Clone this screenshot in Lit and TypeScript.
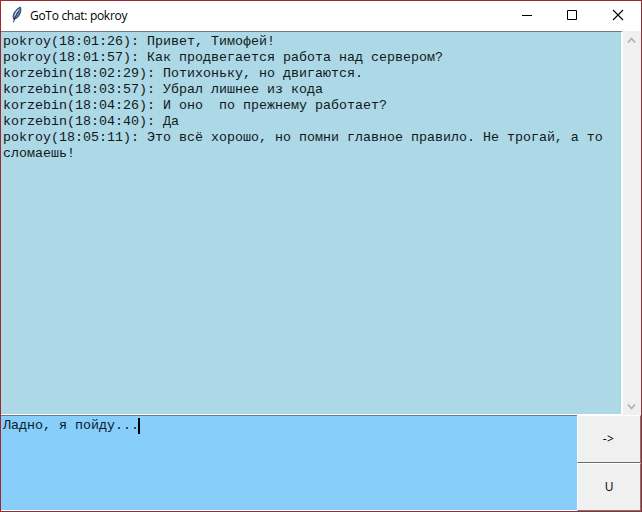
import { LitElement, html, css } from "lit";
import { customElement, property, state } from "lit/decorators.js";

interface Message {
  author: string;
  time: string;
  text: string;
}

@customElement("title-bar")
class TitleBar extends LitElement {
  @property() caption = "";

  static styles = css`
    :host {
      display: flex;
      align-items: center;
      height: 30px;
      background: #fff;
      flex: none;
    }
    .feather {
      width: 16px;
      height: 18px;
      margin-left: 8px;
      margin-bottom: 2px;
    }
    .caption {
      flex: 1;
      margin-left: 5px;
      font: 12px/16px "Open Sans", "Noto Sans", sans-serif;
      letter-spacing: -0.3px;
      color: #000;
      white-space: pre;
    }
    .control {
      width: 46px;
      height: 28px;
      margin-bottom: 2px;
      display: grid;
      place-items: center;
    }
    .control svg {
      display: block;
      width: 12px;
      height: 12px;
    }
  `;

  render() {
    return html`
      <svg class="feather" viewBox="0 0 16 18">
        <path d="M11.300 1.200C8.200 2.200 5 5.800 4.200 9.600c-.2 1.500 0 2.800.6 3.800 3-.8 5.400-3.200 6.300-6.200C12.100 5 12.100 2.800 11.300 1.200z" fill="#5c7eb0" stroke="#1c2a48" stroke-width="0.900" />
        <path d="M9.900 3.600C7.800 5.200 6.200 7.800 5.700 10.400" fill="none" stroke="#b9cfe8" stroke-width="1.400" />
        <path d="M10.200 4.500C7.800 7.500 5.500 11.800 4.500 16.400" fill="none" stroke="#1a2744" stroke-width="0.900" />
      </svg>
      <div class="caption">${this.caption}</div>
      <div class="control">
        <svg viewBox="0 0 12 12"><path d="M2 6.500h10" stroke="#000" fill="none" /></svg>
      </div>
      <div class="control">
        <svg viewBox="0 0 12 12"><path d="M1.500 1.500h9v9h-9z" stroke="#000" fill="none" /></svg>
      </div>
      <div class="control">
        <svg viewBox="0 0 12 12"><path d="M1 1l10 10M11 1L1 11" stroke="#000" stroke-width="1.100" fill="none" /></svg>
      </div>
    `;
  }
}

@customElement("scroll-track")
class ScrollTrack extends LitElement {
  static styles = css`
    :host {
      display: flex;
      flex-direction: column;
      justify-content: space-between;
      width: 17px;
      box-sizing: border-box;
      background: #f0f0f0;
    }
    svg {
      display: block;
      width: 17px;
      height: 17px;
    }
    path {
      fill: none;
      stroke: #b0b0b0;
      stroke-width: 1.8;
    }
  `;

  render() {
    return html`
      <svg viewBox="0 0 17 17"><path d="M5 11.500l3.500-4 3.500 4" /></svg>
      <svg viewBox="0 0 17 17"><path d="M5 6.500l3.500 4 3.500-4" /></svg>
    `;
  }
}

@customElement("app-root")
class AppRoot extends LitElement {
  @state() private messages: Message[] = [
    { author: "pokroy", time: "18:01:26", text: "Привет, Тимофей!" },
    { author: "pokroy", time: "18:01:57", text: "Как продвегается работа над сервером?" },
    { author: "korzebin", time: "18:02:29", text: "Потихоньку, но двигаются." },
    { author: "korzebin", time: "18:03:57", text: "Убрал лишнее из кода" },
    { author: "korzebin", time: "18:04:26", text: "И оно  по прежнему работает?" },
    { author: "korzebin", time: "18:04:40", text: "Да" },
    { author: "pokroy", time: "18:05:11", text: "Это всё хорошо, но помни главное правило. Не трогай, а то сломаешь!" },
  ];

  @state() private draft = "Ладно, я пойду...";

  static styles = css`
    :host {
      display: flex;
      flex-direction: column;
      width: 642px;
      height: 512px;
      box-sizing: border-box;
      border: 1px solid #a3262e;
      border-right-color: #8c3038;
      border-bottom-color: #8c3038;
      background: #f0f0f0;
      overflow: hidden;
    }
    .history {
      display: flex;
      height: 384px;
      flex: none;
    }
    .log,
    .draft {
      box-sizing: border-box;
      border-top: 1px solid #6f7a7e;
      border-bottom: 1px solid #fff;
      padding: 2px 0 0 2px;
      font: 13.333px/16px "Liberation Mono", "Courier New", monospace;
      color: #10181c;
      white-space: pre-wrap;
    }
    .log {
      width: 622px;
      padding-right: 12px;
      border-right: 2px solid #fff;
      background: #add8e6;
    }
    .compose {
      display: flex;
      flex: 1;
      min-height: 0;
    }
    .draft {
      width: 576px;
      background: #87cefa;
      color: #0c1a30;
    }
    .caret {
      display: inline-block;
      width: 2px;
      height: 16px;
      margin-left: -1px;
      vertical-align: top;
      background: #000;
    }
    .buttons {
      display: flex;
      flex-direction: column;
      flex: 1;
    }
    .button {
      flex: 1;
      display: grid;
      place-items: center;
      box-sizing: border-box;
      border: 1px solid #fff;
      border-bottom-color: #696969;
      border-right-color: #8a7070;
      padding-right: 1px;
      background: #f0f0f0;
      font: 12px/16px "Open Sans", "Noto Sans", sans-serif;
      color: #000;
    }
    .button:last-child {
      border-bottom-color: #8a6a6e;
      padding-right: 0;
    }
    .send {
      letter-spacing: 0.3px;
    }
  `;

  render() {
    return html`
      <title-bar caption="GoTo chat: pokroy"></title-bar>
      <div class="history">
        <div class="log">${this.messages.map(
          (m) => html`<div>${`${m.author}(${m.time}): ${m.text}`}</div>`
        )}</div>
        <scroll-track></scroll-track>
      </div>
      <div class="compose">
        <div class="draft">${this.draft}<span class="caret"></span></div>
        <div class="buttons">
          <div class="button send">-&gt;</div>
          <div class="button">U</div>
        </div>
      </div>
    `;
  }
}
